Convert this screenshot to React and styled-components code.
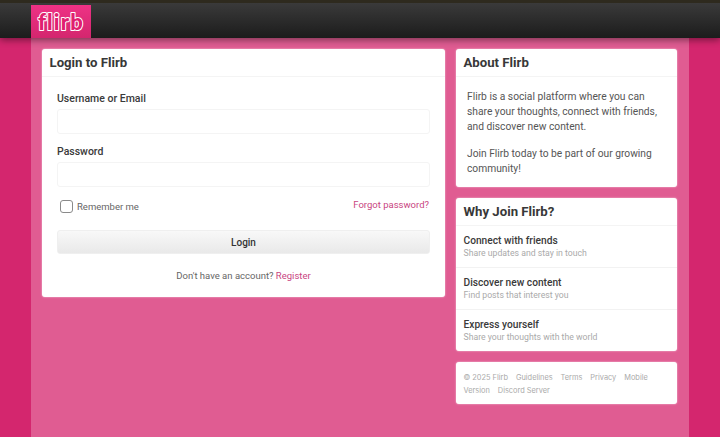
import React from 'react';
import styled, { createGlobalStyle } from 'styled-components';

const Global = createGlobalStyle`
  html, body { margin: 0; padding: 0; height: 437px; overflow: hidden; }
  body { background: #d4266e; font-family: Roboto, "Liberation Sans", sans-serif; color: #333; }
  * { box-sizing: border-box; }
`;
const Header = styled.header`
  height: 38px;
  border-top: 3px solid #2e2a1e;
  background: linear-gradient(#3a3a3a, #1c1c1c);
  padding: 2px 0 0 31px;
  box-shadow: 0 2px 7px rgba(0,0,0,.45);
  position: relative;
  z-index: 1;
`;
const Logo = styled.div`
  width: 60px; height: 33px;
  background: linear-gradient(#ee3285, #d4266e);
  display: flex; align-items: center; justify-content: center;
  svg { display: block; }
`;
const Page = styled.main`
  width: 658px; height: 399px; margin-left: 31px;
  background: #e05c92;
  padding: 11px 12px 0 11px;
  display: flex; gap: 11px; align-items: flex-start;
`;
const Left = styled.div`width: 403px;`;
const Right = styled.div`width: 221px; display: flex; flex-direction: column; gap: 11px;`;
const Card = styled.section`
  background: #fff; border-radius: 3px;
  box-shadow: 0 0 2px rgba(255,255,255,.7);
`;
const CardTitle = styled.h2`
  margin: 0; height: 28px; padding: 0 7.5px;
  font-size: 13.2px; line-height: 27px; font-weight: 700; color: #383838;
  border-bottom: 1px solid #f4f4f4;
`;
const Form = styled.form`padding: 14px 15px 14px;`;
const Label = styled.label`
  display: block; font-size: 10.5px; font-weight: 500; color: #3a3a3a; line-height: 14px; padding-top: 1px; margin-bottom: 3px;
`;
const Input = styled.input`
  display: block; width: 100%; height: 25px; border: 1px solid #f4f4f4; border-radius: 3px;
  background: #fff; margin-bottom: 10px; outline: none;
`;
const OptionsRow = styled.div`
  display: flex; justify-content: space-between; align-items: flex-start;
  margin-top: 12px; height: 31px; padding: 0 1px 0 3px;
`;
const Remember = styled.span`
  display: flex; align-items: center; gap: 4px; padding-top: 1px; font-size: 9.5px; color: #666; line-height: 14px;
`;
const Check = styled.span`
  width: 13px; height: 13px; border: 1px solid #8a8a8a; border-radius: 3px; background: #fff; display: block;
  margin-top: -2px;
`;
const PinkLink = styled.a`color: #c9457f; font-size: 9.5px; text-decoration: none;`;
const Button = styled.button`
  display: block; width: 100%; height: 24px; border: 1px solid #efefef; border-radius: 3px;
  background: linear-gradient(#f8f8f8, #e9e9e9); font: 500 10px Roboto, sans-serif; color: #333;
`;
const Signup = styled.p`
  margin: 15px 0 0; text-align: center; font-size: 9.5px; color: #666; line-height: 14px;
`;
const AboutBody = styled.div`
  padding: 12px 11px 11px; font-size: 10.25px; line-height: 15.2px; color: #555;
  p { margin: 0 0 11px; }
  p:last-child { margin: 0; }
`;
const Feature = styled.div`
  padding: 8px 7.5px 0; height: ${p => (p.$last ? '41px' : '42px')};
  border-bottom: ${p => (p.$last ? 'none' : '1px solid #f2f2f2')};
`;
const FeatureTitle = styled.div`font-size: 10.2px; font-weight: 500; color: #3a3a3a; line-height: 14px;`;
const FeatureText = styled.div`font-size: 8.7px; color: #aaa; line-height: 11px;`;
const Footer = styled(Card)`
  padding: 9px 7.5px 7px; font-family: Inter, sans-serif; font-size: 7.4px; line-height: 13px; color: #aaa;
  a { color: #aaa; text-decoration: none; margin-right: 5.9px; }
`;

export default function App() {
  return (
    <>
      <Global />
      <Header>
        <Logo>
          <svg width="56" height="30" viewBox="0 0 56 30">
            <text x="28" y="22.5" textAnchor="middle" fontFamily="Lato, sans-serif" fontWeight="900" fontSize="22" letterSpacing="1.2" fill="#e0206f" stroke="#fff" strokeWidth="2" strokeLinejoin="round" paintOrder="stroke">flirb</text>
          </svg>
        </Logo>
      </Header>
      <Page>
        <Left>
          <Card>
            <CardTitle>Login to Flirb</CardTitle>
            <Form>
              <Label>Username or Email</Label>
              <Input />
              <Label>Password</Label>
              <Input />
              <OptionsRow>
                <Remember><Check />Remember me</Remember>
                <PinkLink href="#">Forgot password?</PinkLink>
              </OptionsRow>
              <Button type="button">Login</Button>
              <Signup>Don't have an account? <PinkLink href="#">Register</PinkLink></Signup>
            </Form>
          </Card>
        </Left>
        <Right>
          <Card>
            <CardTitle>About Flirb</CardTitle>
            <AboutBody>
              <p>Flirb is a social platform where you can share your thoughts, connect with friends, and discover new content.</p>
              <p>Join Flirb today to be part of our growing community!</p>
            </AboutBody>
          </Card>
          <Card>
            <CardTitle>Why Join Flirb?</CardTitle>
            <Feature><FeatureTitle>Connect with friends</FeatureTitle><FeatureText>Share updates and stay in touch</FeatureText></Feature>
            <Feature><FeatureTitle>Discover new content</FeatureTitle><FeatureText>Find posts that interest you</FeatureText></Feature>
            <Feature $last><FeatureTitle>Express yourself</FeatureTitle><FeatureText>Share your thoughts with the world</FeatureText></Feature>
          </Card>
          <Footer as="footer">
            <a>© 2025 Flirb</a> <a>Guidelines</a> <a>Terms</a> <a>Privacy</a> <a>Mobile</a> <a>Version</a> <a>Discord Server</a>
          </Footer>
        </Right>
      </Page>
    </>
  );
}
